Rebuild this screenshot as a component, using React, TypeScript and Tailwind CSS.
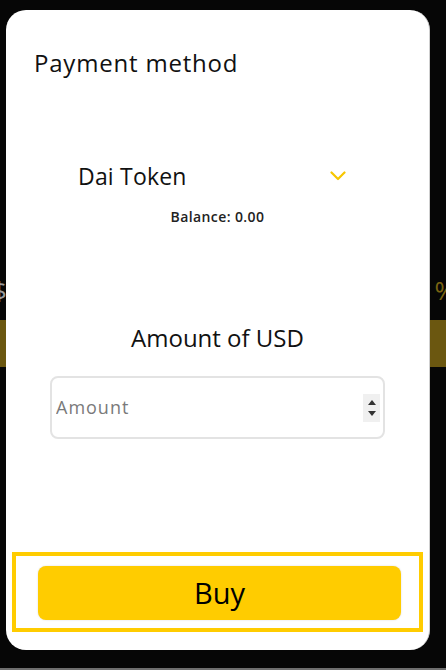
function Chevron() {
  return (
    <svg width="16" height="10" viewBox="0 0 16 10" fill="none">
      <polyline
        points="1.5,1.5 8,8 14.5,1.5"
        stroke="#f7c600"
        strokeWidth="2.2"
        strokeLinecap="round"
        strokeLinejoin="round"
      />
    </svg>
  );
}

function Spinner() {
  return (
    <div className="flex h-[28px] w-[17px] flex-col items-center justify-center gap-[6px] bg-[#f0f0f0]">
      <svg width="8" height="5" viewBox="0 0 8 5">
        <polygon points="4,0 8,5 0,5" fill="#333" />
      </svg>
      <svg width="8" height="5" viewBox="0 0 8 5">
        <polygon points="0,0 8,0 4,5" fill="#333" />
      </svg>
    </div>
  );
}

export default function App() {
  return (
    <div
      className="relative h-[670px] w-[446px] overflow-hidden bg-[#060606]"
      style={{ fontFamily: '"Open Sans", "Noto Sans", sans-serif' }}
    >
      {/* page behind the overlay */}
      <div className="flex h-full flex-col">
        <div className="h-[276px]" />
        <div className="flex h-[28px] items-center justify-between text-[26px] leading-none">
          <span className="-ml-[8px] text-[#9a9a9a]">$</span>
          <span className="-mr-[10px] text-[#7a6412]">%</span>
        </div>
        <div className="h-[16px]" />
        <div className="h-[47px] bg-[#6b5710]" />
        <div className="flex-1" />
        <div className="h-[2px] bg-[#6e6e6e]" />
      </div>

      {/* modal */}
      <div className="absolute left-[6px] top-[10px] flex h-[640px] w-[424px] flex-col rounded-[20px] border-r border-[#cfcfcf] bg-white">
        <h2 className="pl-[28px] pt-[37px] text-[24px] leading-8 font-medium tracking-[0.8px] text-[#111]">
          Payment method
        </h2>

        <div className="ml-[72px] mr-[83px] mt-[81px] flex h-[32px] items-center justify-between">
          <span className="text-[23px] leading-8 text-[#111] tracking-[0.2px]">Dai Token</span>
          <Chevron />
        </div>

        <p className="mt-[15px] text-center text-[14px] leading-5 font-semibold tracking-[0.4px] text-[#222]">
          Balance: 0.00
        </p>

        <h3 className="mt-[95px] text-center text-[24px] leading-8 font-medium text-[#111]">
          Amount of USD
        </h3>

        <div className="mx-auto mt-[22px] flex h-[63px] w-[335px] items-center rounded-[8px] border-2 border-[#e3e3e3] pl-[4px] pr-[3px]">
          <input
            readOnly
            placeholder="Amount"
            className="min-w-0 flex-1 bg-transparent text-[18px] tracking-[1px] text-[#111] outline-none placeholder:text-[#7a7a7a]"
          />
          <Spinner />
        </div>

        <div className="flex-1" />

        <div className="mx-[6px] mb-[18px] border-4 border-[#ffcc00] pb-[8px] pl-[22px] pr-[18px] pt-[10px]">
          <button className="flex h-[54px] w-full items-center justify-center rounded-[8px] bg-[#ffcc00] text-[29px] text-black shadow-[0_0_2px_rgba(0,0,0,0.15)]">
            Buy
          </button>
        </div>
      </div>
    </div>
  );
}
